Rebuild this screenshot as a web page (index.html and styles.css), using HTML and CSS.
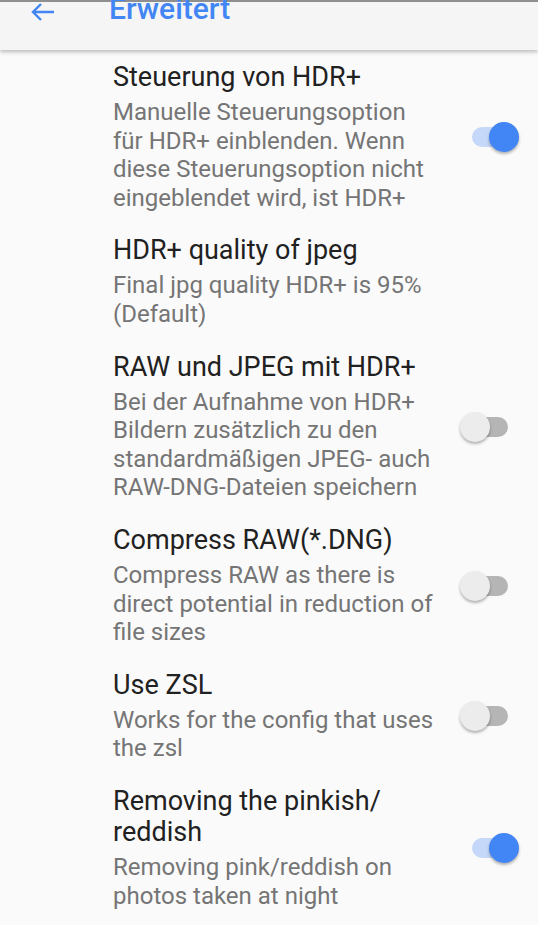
FILE: index.html
```html
<!DOCTYPE html>
<html lang="de">
<head>
    <meta charset="UTF-8">
    <meta name="viewport" content="width=device-width, initial-scale=1.0">
    <title>Erweitert</title>
    <link rel="stylesheet" href="styles.css">
</head>
<body>
    <div class="toolbar">
        <svg class="back" width="25" height="20" viewBox="0 0 25 20">
            <path d="M24 10H3M11 2L3 10L11 18" fill="none" stroke="#4285f4" stroke-width="2.4"/>
        </svg>
        <span class="toolbar-title">Erweitert</span>
    </div>
    <div class="list">
        <div class="pref">
            <div class="pref-text">
                <div class="pref-title">Steuerung von HDR+</div>
                <div class="pref-summary">Manuelle Steuerungsoption für HDR+ einblenden. Wenn diese Steuerungsoption nicht eingeblendet wird, ist HDR+</div>
            </div>
            <div class="pref-widget"><span class="switch on"></span></div>
        </div>
        <div class="pref">
            <div class="pref-text">
                <div class="pref-title">HDR+ quality of jpeg</div>
                <div class="pref-summary">Final jpg quality HDR+ is 95% (Default)</div>
            </div>
            <div class="pref-widget"></div>
        </div>
        <div class="pref">
            <div class="pref-text">
                <div class="pref-title">RAW und JPEG mit HDR+</div>
                <div class="pref-summary">Bei der Aufnahme von HDR+ Bildern zusätzlich zu den standardmäßigen JPEG- auch RAW-DNG-Dateien speichern</div>
            </div>
            <div class="pref-widget"><span class="switch"></span></div>
        </div>
        <div class="pref">
            <div class="pref-text">
                <div class="pref-title">Compress RAW(*.DNG)</div>
                <div class="pref-summary">Compress RAW as there is direct potential in reduction of file sizes</div>
            </div>
            <div class="pref-widget"><span class="switch"></span></div>
        </div>
        <div class="pref">
            <div class="pref-text">
                <div class="pref-title">Use ZSL</div>
                <div class="pref-summary">Works for the config that uses the zsl</div>
            </div>
            <div class="pref-widget"><span class="switch"></span></div>
        </div>
        <div class="pref">
            <div class="pref-text">
                <div class="pref-title">Removing the pinkish/ reddish</div>
                <div class="pref-summary">Removing pink/reddish on photos taken at night</div>
            </div>
            <div class="pref-widget"><span class="switch on"></span></div>
        </div>
    </div>
</body>
</html>
```

FILE: styles.css
```css
body {
    margin: 0;
    background: #fafafa;
    font-family: Roboto, "Noto Sans", sans-serif;
    overflow: hidden;
}
.toolbar {
    height: 48px;
    border-top: 2px solid #8f8f8f;
    background: #f5f5f5;
    box-shadow: 0 2px 4px rgba(0, 0, 0, 0.25);
    position: relative;
    display: flex;
    align-items: flex-start;
}
.back {
    margin: 0 0 0 30px;
    display: block;
}
.toolbar-title {
    margin-left: 54px;
    margin-top: -8px;
    font-size: 30px;
    font-weight: 500;
    color: #4285f4;
    line-height: 30px;
}
.list {
    padding-top: 0;
}
.pref {
    display: flex;
    align-items: center;
    padding: 12px 0 11px 113px;
}
.pref-text {
    width: 324px;
}
.pref-title {
    font-size: 27px;
    line-height: 31px;
    color: #212121;
}
.pref-summary {
    margin-top: 5px;
    font-size: 24px;
    line-height: 28.6px;
    color: #757575;
}
.pref-widget {
    flex: 1;
    display: flex;
    justify-content: center;
    padding-left: 4px;
}
.switch {
    position: relative;
    width: 36px;
    height: 20px;
    border-radius: 10px;
    background: #b5b5b5;
    display: block;
}
.switch::after {
    content: "";
    position: absolute;
    left: -12px;
    top: -5px;
    width: 30px;
    height: 30px;
    border-radius: 50%;
    background: #ececec;
    box-shadow: 0 2px 3px rgba(0, 0, 0, 0.3);
}
.switch.on {
    background: #c5d8fa;
}
.switch.on::after {
    left: 17px;
    background: #4285f4;
}
```
